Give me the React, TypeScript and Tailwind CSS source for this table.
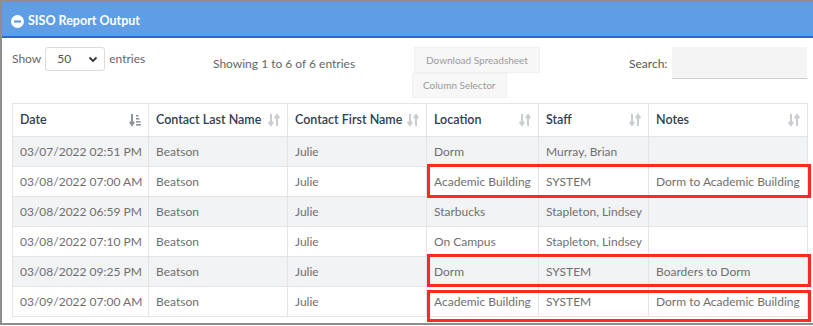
import React from 'react';

const rows = [
  ['03/07/2022 02:51 PM', 'Beatson', 'Julie', 'Dorm', 'Murray, Brian', ''],
  ['03/08/2022 07:00 AM', 'Beatson', 'Julie', 'Academic Building', 'SYSTEM', 'Dorm to Academic Building'],
  ['03/08/2022 06:59 PM', 'Beatson', 'Julie', 'Starbucks', 'Stapleton, Lindsey', ''],
  ['03/08/2022 07:10 PM', 'Beatson', 'Julie', 'On Campus', 'Stapleton, Lindsey', ''],
  ['03/08/2022 09:25 PM', 'Beatson', 'Julie', 'Dorm', 'SYSTEM', 'Boarders to Dorm'],
  ['03/09/2022 07:00 AM', 'Beatson', 'Julie', 'Academic Building', 'SYSTEM', 'Dorm to Academic Building'],
];

const columns = [
  { label: 'Date', width: 'w-[136px]', active: true },
  { label: 'Contact Last Name', width: 'w-[139px]' },
  { label: 'Contact First Name', width: 'w-[139px]' },
  { label: 'Location', width: 'w-[112px]' },
  { label: 'Staff', width: 'w-[110px]' },
  { label: 'Notes', width: 'w-[159px]' },
];

const SortBoth = () => (
  <svg width="12" height="14" viewBox="0 0 12 14" className="shrink-0">
    <path d="M3 1v10M0.8 8.8L3 12l2.2-3.2" stroke="#c9ccd1" strokeWidth="2" fill="none" />
    <path d="M9 13V3M6.8 5.2L9 2l2.2 3.2" stroke="#c9ccd1" strokeWidth="2" fill="none" />
  </svg>
);

const SortDown = () => (
  <svg width="12" height="14" viewBox="0 0 12 14" className="shrink-0">
    <path d="M3 1v10M0.8 8.8L3 12l2.2-3.2" stroke="#8f959d" strokeWidth="2" fill="none" />
    <rect x="7" y="2" width="2.5" height="1.6" fill="#8f959d" />
    <rect x="7" y="5" width="3.5" height="1.6" fill="#8f959d" />
    <rect x="7" y="8" width="4.5" height="1.6" fill="#8f959d" />
    <rect x="7" y="11" width="5" height="1.6" fill="#8f959d" />
  </svg>
);

export default function App() {
  return (
    <div className="w-[813px] h-[326px] overflow-hidden bg-white font-['Lato','Liberation_Sans',sans-serif]">
      <div className="flex flex-col border-t-2 border-l-2 border-b-2 border-[#8e8e8e] h-[325px]">
        <div className="h-[36px] bg-[#5f9de6] border-b-2 border-[#2a6cc2] flex items-center pl-[9px] pt-[4px] gap-[4px] shrink-0">
          <svg width="13" height="13" viewBox="0 0 13 13">
            <circle cx="6.5" cy="6.5" r="6.5" fill="#fff" />
            <rect x="3" y="5.4" width="7" height="2.2" fill="#5f9de6" />
          </svg>
          <span className="text-white text-[12.5px] font-bold">SISO Report Output</span>
        </div>

        <div className="pl-[10px] pr-[4px] pt-[9px]">
          <div className="flex h-[57px]">
            <div className="flex items-start gap-[4px] w-[201px] text-[12px] text-[#666]">
              <span className="mt-[3px]">Show</span>
              <div className="w-[60px] h-[24px] border border-[#dcdcdc] rounded-[3px] flex items-center justify-between pl-[11px] pr-[6px] text-[#555] text-[12px] bg-white">
                <span>50</span>
                <svg width="10" height="7" viewBox="0 0 10 7">
                  <path d="M1.5 1.5L5 5l3.5-3.5" stroke="#333" strokeWidth="1.8" fill="none" />
                </svg>
              </div>
              <span className="mt-[3px]">entries</span>
            </div>
            <div className="w-[199px] pt-[8px] text-[12px] text-[#666]">Showing 1 to 6 of 6 entries</div>
            <div className="flex flex-col items-start w-[217px] text-[10px] text-[#9a9a9a]">
              <div className="h-[26px] px-[11px] flex items-center bg-[#f7f7f7] border border-[#f0f0f0] ml-[2px]">Download Spreadsheet</div>
              <div className="h-[25px] px-[10px] flex items-center bg-[#f7f7f7] border border-[#f0f0f0]">Column Selector</div>
            </div>
            <div className="flex items-start gap-[5px] text-[12px] text-[#555]">
              <span className="mt-[8px]">Search:</span>
              <div className="w-[135px] h-[32px] bg-[#f4f4f4] border-b border-[#cfcfcf]" />
            </div>
          </div>

          <div className="relative -mt-[1px]">
            <table className="table-fixed border-collapse w-[795px] text-[12px]">
              <thead>
                <tr className="h-[33px]">
                  {columns.map((c) => (
                    <th key={c.label} className={`${c.width} border border-[#e4e4e4] px-[7px] text-left text-[12.5px] font-semibold text-[#2f4050]`}>
                      <div className="flex items-center justify-between">
                        <span className="whitespace-nowrap">{c.label}</span>
                        {c.active ? <SortDown /> : <SortBoth />}
                      </div>
                    </th>
                  ))}
                </tr>
              </thead>
              <tbody>
                {rows.map((r, i) => (
                  <tr key={i} className={i % 2 === 0 ? 'h-[30px] bg-[#f2f3f5]' : 'h-[30px] bg-white'}>
                    {r.map((cell, j) => (
                      <td key={j} className="border border-[#e4e4e4] px-[7px] text-[#6f6f6f] whitespace-nowrap overflow-hidden">
                        {cell}
                      </td>
                    ))}
                  </tr>
                ))}
              </tbody>
            </table>

            <div className="absolute left-[415px] top-[61px] w-[384px] h-[34px] border-[3px] border-[#ff2a1f]" />
            <div className="absolute left-[415px] top-[151px] w-[384px] h-[33px] border-[3px] border-[#ff2a1f]" />
            <div className="absolute left-[415px] top-[187px] w-[384px] h-[32px] border-[3px] border-[#ff2a1f]" />
          </div>
        </div>
      </div>
    </div>
  );
}
